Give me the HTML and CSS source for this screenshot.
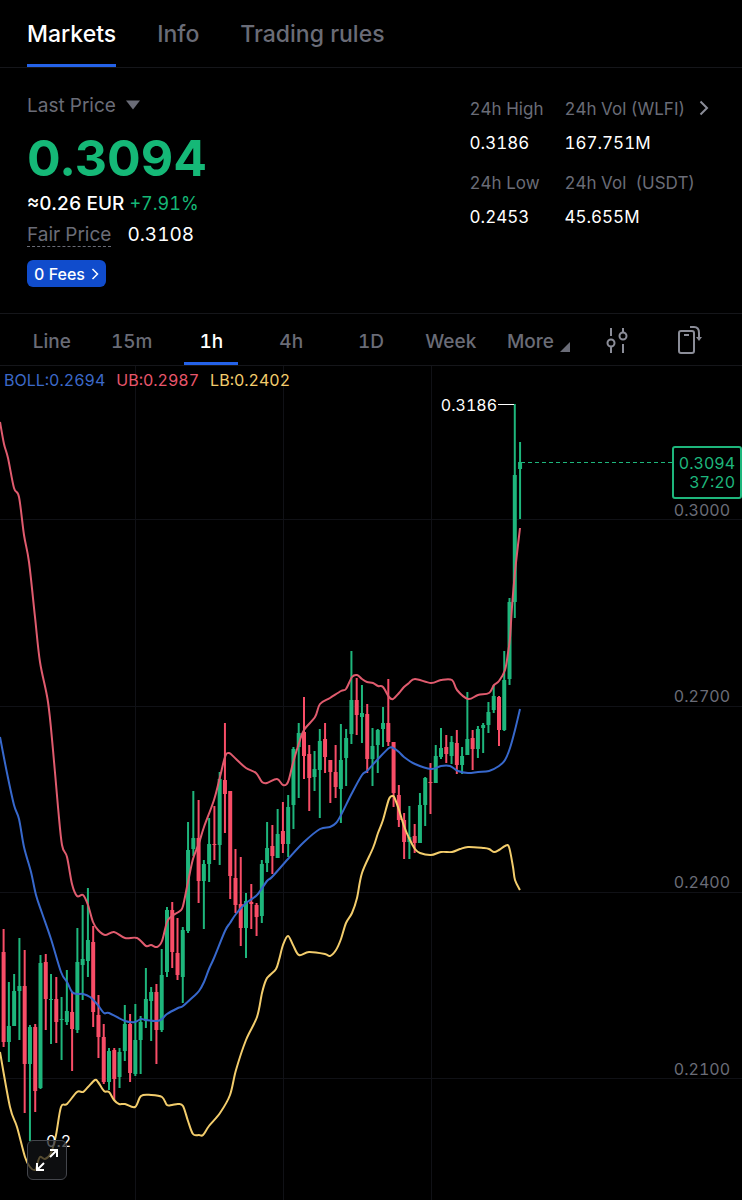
FILE: index.html
```html
<!DOCTYPE html>
<html lang="en">
<head>
    <title>WLFI/USDT Markets</title>
    <meta charset="UTF-8">
    <meta name="viewport" content="width=device-width, initial-scale=1.0">
    <link rel="stylesheet" href="styles.css">
</head>
<body>
    <nav class="tabs">
        <button type="button" class="tab active">Markets</button>
        <button type="button" class="tab">Info</button>
        <button type="button" class="tab">Trading rules</button>
    </nav>

    <!-- Price summary -->
    <section class="summary">
        <div class="price-block">
            <button type="button" class="price-type">
                Last Price
                <svg width="14" height="10" viewBox="0 0 14 10"><path d="M0 0.5h14L7 9.5z" fill="currentColor"/></svg>
            </button>
            <div class="last-price">0.3094</div>
            <div class="converted">≈0.26 EUR <span class="up">+7.91%</span></div>
            <div class="fair"><span class="fair-label">Fair Price</span><span class="fair-value">0.3108</span></div>
            <button type="button" class="fees">
                0 Fees
                <svg width="8" height="12" viewBox="0 0 8 12"><path d="M1.5 1L6.5 6l-5 5" fill="none" stroke="currentColor" stroke-width="1.5"/></svg>
            </button>
        </div>
        <div class="stats">
            <dl class="stat"><dt>24h High</dt><dd>0.3186</dd></dl>
            <dl class="stat"><dt>24h Vol (WLFI)</dt><dd>167.751M</dd></dl>
            <dl class="stat"><dt>24h Low</dt><dd>0.2453</dd></dl>
            <dl class="stat"><dt>24h Vol&nbsp; (USDT)</dt><dd>45.655M</dd></dl>
        </div>
        <button type="button" class="stats-more" aria-label="More statistics">
            <svg width="10" height="16" viewBox="0 0 10 16"><path d="M1.5 1.5L8 8l-6.500 6.500" fill="none" stroke="currentColor" stroke-width="2"/></svg>
        </button>
    </section>

    <!-- Chart intervals -->
    <nav class="intervals">
        <button type="button" class="interval">Line</button>
        <button type="button" class="interval">15m</button>
        <button type="button" class="interval active">1h</button>
        <button type="button" class="interval">4h</button>
        <button type="button" class="interval">1D</button>
        <button type="button" class="interval">Week</button>
        <button type="button" class="interval more">
            More
            <svg width="10" height="10" viewBox="0 0 10 10"><path d="M10 0v10H0z" fill="currentColor"/></svg>
        </button>
        <button type="button" class="interval icon" aria-label="Indicators">
            <svg width="22" height="28" viewBox="0 0 22 28" fill="none" stroke="currentColor" stroke-width="2">
                <path d="M5 2v8M5 20v7M17 2v5M17 18v9"/>
                <circle cx="5" cy="17" r="3.500"/>
                <circle cx="17" cy="10" r="3.500"/>
            </svg>
        </button>
        <button type="button" class="interval icon" aria-label="Rotate screen">
            <svg width="26" height="30" viewBox="0 0 26 30" fill="none" stroke="currentColor" stroke-width="2">
                <rect x="2" y="6" width="15" height="22" rx="2"/>
                <path d="M7 10h5M13 2h4q5 0 5 6v5"/>
                <path d="M19 12h6l-3 4z" fill="currentColor" stroke="none"/>
            </svg>
        </button>
    </nav>

    <main class="chart">
        <div class="legend">
            <span class="boll">BOLL:0.2694</span>
            <span class="ub">UB:0.2987</span>
            <span class="lb">LB:0.2402</span>
        </div>
        <svg class="plot" viewBox="0 366 742 834">
            <path class="grid" d="M0 519.500H742M0 706.500H742M0 892.500H742M0 1078.500H742M135.500 366V1200M283.500 366V1200M431.500 366V1200"/>
            <g id="candles"></g>
            <g id="bands"></g>
            <path class="current-line" d="M521 462.500H673"/>
            <path class="high-mark" d="M498 404.500H514"/>
            <text class="mark" x="497" y="411" text-anchor="end">0.3186</text>
            <text class="mark" x="46" y="1147">0.2</text>
            <g class="axis">
                <text x="730" y="516">0.3000</text>
                <text x="730" y="702">0.2700</text>
                <text x="730" y="888">0.2400</text>
                <text x="730" y="1075">0.2100</text>
            </g>
            <rect class="tag-box" x="673" y="447" width="68" height="51" rx="2"/>
            <g class="tag-text">
                <text x="735" y="469">0.3094</text>
                <text x="735" y="488">37:20</text>
            </g>
        </svg>
        <button type="button" class="expand" aria-label="Full screen">
            <svg width="26" height="26" viewBox="0 0 26 26" fill="none" stroke="currentColor" stroke-width="2">
                <path d="M16 10l7-7M16 3h7v7M10 16l-7 7M3 16v7h7"/>
            </svg>
        </button>
    </main>

    <script>
        // direction, high, body top, body bottom, low (chart units)
        const candles = [
            ["r",929,952,1042,1047], ["g",982,1026,1042,1062], ["g",974,991,1026,1026], ["g",938,986,991,1040],
            ["r",950,986,1064,1113], ["g",1025,1027,1064,1141], ["r",1024,1027,1091,1112], ["g",955,963,1088,1089],
            ["r",954,962,999,1030], ["g",974,999,1000,1044], ["r",977,999,1022,1043], ["g",997,1019,1020,1060],
            ["g",970,1011,1022,1025], ["r",992,1012,1029,1071], ["g",928,962,1030,1033], ["g",905,959,965,1000],
            ["g",888,940,961,977], ["r",926,942,1012,1027], ["r",995,1015,1037,1058], ["r",1024,1037,1082,1084],
            ["g",1048,1051,1082,1090], ["r",1048,1050,1079,1100], ["g",1048,1052,1077,1088], ["g",1005,1024,1051,1061],
            ["r",1014,1024,1073,1082], ["g",1004,1040,1074,1076], ["g",1016,1022,1040,1074], ["g",968,999,1021,1028],
            ["g",987,992,1001,1041], ["r",984,992,1030,1064], ["g",949,975,1030,1032], ["g",907,910,972,977],
            ["r",902,910,952,968], ["r",918,953,975,980], ["g",927,930,977,1003], ["g",822,850,931,933],
            ["g",791,838,849,856], ["r",800,838,881,903], ["g",860,864,881,929], ["g",818,844,864,882],
            ["r",806,844,845,860], ["g",772,779,845,865], ["r",723,780,794,833], ["r",791,791,876,899],
            ["r",849,878,905,913], ["r",857,904,928,946], ["g",893,901,928,958], ["r",884,902,904,929],
            ["r",903,905,917,936], ["g",860,864,916,923], ["g",822,848,863,872], ["r",825,846,856,874],
            ["g",809,834,858,858], ["r",802,831,844,853], ["g",795,807,844,857], ["g",747,749,805,829],
            ["g",723,733,747,798], ["r",697,732,756,779], ["r",745,754,778,811], ["g",751,769,777,791],
            ["g",729,741,770,818], ["r",723,739,757,773], ["r",760,760,772,803], ["r",745,772,787,798],
            ["g",724,760,789,823], ["g",729,738,758,786], ["g",651,700,734,744], ["r",678,700,715,735],
            ["g",685,713,717,743], ["r",704,714,759,773], ["g",728,746,759,786], ["g",729,730,745,773],
            ["g",707,723,729,747], ["r",679,723,742,746], ["r",742,742,793,807], ["r",785,795,820,827],
            ["r",813,820,842,859], ["g",806,837,842,859], ["r",824,836,843,853], ["g",793,805,843,843],
            ["g",777,778,805,826], ["r",763,782,783,814], ["g",745,756,783,783], ["g",728,748,757,759],
            ["r",735,747,754,763], ["g",736,742,756,764], ["r",730,743,765,774], ["g",747,756,765,774],
            ["g",692,739,755,755], ["r",730,738,749,770], ["g",726,729,749,758], ["g",723,725,728,753],
            ["g",702,712,725,733], ["g",685,696,710,713], ["r",696,697,730,746], ["g",651,680,730,731],
            ["g",598,602,679,685], ["g",404,475,602,618], ["g",442,462,469,519]
        ];

        const bands = {
            upper: [0,422, 4,444, 8,458, 14,488, 19,497, 24,535, 29,562, 35,617, 40,662, 48,702, 53,750, 58,807, 62,845, 67,857,
                72,884, 77,896, 83,895, 88,905, 93,922, 98,930, 105,935, 114,932, 125,938, 137,938, 146,946, 151,945, 157,947,
                162,941, 167,922, 172,916, 180,911, 183,906, 188,882, 193,859, 199,843, 204,827, 214,800, 220,777, 225,757,
                229,753, 236,759, 246,768, 256,773, 262,782, 267,783, 277,779, 283,785, 288,782, 293,763, 299,743, 304,730,
                315,717, 320,704, 330,698, 341,691, 346,689, 352,677, 357,675, 362,679, 367,682, 373,683, 378,686, 383,687,
                389,697, 393,699, 399,693, 404,687, 409,683, 415,679, 431,683, 441,680, 452,680, 457,690, 468,699, 478,695,
                489,693, 494,685, 499,681, 505,670, 508,653, 510,638, 512,607, 515,572, 520,528],
            middle: [0,737, 7,773, 14,805, 19,819, 24,847, 31,872, 36,895, 42,913, 51,939, 61,972, 67,982, 72,992, 77,994, 83,994,
                90,997, 97,1004, 104,1013, 109,1013, 125,1021, 135,1022, 141,1019, 146,1020, 157,1021, 162,1019, 167,1014,
                178,1008, 183,1006, 193,997, 199,991, 204,982, 209,969, 214,958, 225,931, 230,923, 236,914, 246,903, 257,895,
                267,881, 272,877, 288,859, 304,842, 320,829, 330,827, 336,823, 341,815, 352,793, 362,775, 367,771, 378,759,
                389,748, 393,748, 399,752, 404,757, 415,764, 431,769, 441,766, 450,766, 458,771, 468,773, 478,772, 489,771,
                499,766, 505,760, 510,748, 515,730, 520,709],
            lower: [0,1052, 10,1107, 17,1127, 25,1157, 30,1167, 35,1170, 37,1165, 40,1157, 45,1159, 51,1153, 56,1135, 61,1107,
                67,1104, 77,1092, 83,1092, 88,1087, 95,1080, 98,1082, 104,1091, 109,1092, 114,1100, 119,1104, 125,1104,
                135,1107, 141,1096, 151,1095, 162,1097, 167,1105, 172,1105, 178,1104, 183,1106, 188,1121, 193,1134, 199,1135,
                203,1135, 209,1126, 220,1113, 230,1095, 236,1070, 246,1040, 257,1017, 262,993, 266,980, 270,975, 276,969,
                279,960, 283,945, 288,936, 293,945, 299,955, 309,952, 325,954, 330,956, 336,950, 341,939, 346,923, 352,913,
                357,898, 362,873, 373,848, 378,833, 383,820, 389,799, 393,796, 395,799, 399,810, 404,826, 409,838, 415,849,
                420,853, 431,855, 441,852, 452,852, 460,849, 468,847, 483,848, 489,849, 494,852, 499,850, 505,846, 509,847,
                513,867, 515,880, 520,890]
        };

        const NS = "http://www.w3.org/2000/svg";

        function addPath(parent, className, d) {
            const path = document.createElementNS(NS, "path");
            path.setAttribute("class", className);
            path.setAttribute("d", d);
            parent.appendChild(path);
        }

        // Smooth curve through all points
        function smooth(values) {
            const points = [];
            for (let i = 0; i < values.length; i += 2) {
                points.push([values[i], values[i + 1]]);
            }
            let d = `M${points[0]}`;
            for (let i = 0; i < points.length - 1; i++) {
                const a = points[i - 1] || points[i];
                const b = points[i];
                const c = points[i + 1];
                const e = points[i + 2] || c;
                d += `C${b[0] + (c[0] - a[0]) / 6},${b[1] + (c[1] - a[1]) / 6} ${c[0] - (e[0] - b[0]) / 6},${c[1] - (e[1] - b[1]) / 6} ${c}`;
            }
            return d;
        }

        const candleGroup = document.getElementById("candles");
        candles.forEach(([dir, high, top, bottom, low], i) => {
            const x = 3.6 + i * 5.27;
            addPath(candleGroup, `wick ${dir}`, `M${x} ${high}V${low}`);
            addPath(candleGroup, `body ${dir}`, `M${x} ${top}V${bottom}`);
        });

        const bandGroup = document.getElementById("bands");
        Object.keys(bands).forEach((name) => {
            addPath(bandGroup, `band ${name}`, smooth(bands[name]));
        });
    </script>
</body>
</html>
```
FILE: styles.css
```css
*, *:before, *:after {
    box-sizing: border-box;
}

body {
    margin: 0;
    background-color: #000;
    color: #fff;
    font-family: Inter, "Liberation Sans", sans-serif;
    font-size: 19px;
    font-variant-numeric: tabular-nums;
}

button {
    padding: 0;
    border: none;
    background: none;
    color: inherit;
    font: inherit;
    font-variant-numeric: inherit;
    cursor: pointer;
}

svg {
    display: block;
}

.tabs {
    display: flex;
    gap: 41px;
    height: 68px;
    padding: 0 27px;
    border-bottom: 1px solid #15161a;
}

.tab {
    height: 67px;
    padding-top: 4px;
    border-bottom: 3px solid transparent;
    color: #6a6c77;
    font-size: 23px;
    font-weight: 500;
}

.tab.active {
    color: #fff;
    border-bottom-color: #2462e8;
}

.summary {
    display: flex;
    align-items: flex-start;
    padding: 24px 33px 26px 27px;
    border-bottom: 1px solid #15161a;
}

.price-block {
    flex: 1;
}

.price-type {
    display: flex;
    align-items: center;
    gap: 10px;
    height: 26px;
    color: #6a6c77;
}

.last-price {
    color: #15b877;
    font-size: 50px;
    font-weight: 700;
    font-variant-numeric: normal;
    line-height: 60px;
    margin-top: 10px;
}

.converted {
    font-weight: 500;
    line-height: 30px;
    margin-top: 1px;
}

.up {
    color: #15b877;
    font-size: 18px;
    font-weight: 400;
}

.fair {
    display: flex;
    gap: 16px;
    line-height: 22px;
    margin-top: 5px;
}

.fair-label {
    color: #6a6c77;
    border-bottom: 1px dashed #6a6c77;
}

.fair-value {
    font-size: 19px;
}

.fees {
    display: flex;
    align-items: center;
    gap: 6px;
    height: 27px;
    margin-top: 13px;
    padding: 0 7px;
    border-radius: 6px;
    background-color: #104ccc;
    font-size: 16px;
    font-weight: 500;
}

.stats {
    display: grid;
    grid-template-columns: auto auto;
    column-gap: 21px;
    row-gap: 6px;
}

.stat {
    margin: 0;
    line-height: 34px;
}

.stat dt {
    color: #6a6c77;
    font-size: 17px;
}

.stat dd {
    margin: 0;
    font-size: 17px;
}

.stats-more {
    color: #8b8d98;
    margin: 8px 0 0 4px;
}

.intervals {
    display: grid;
    grid-template-columns: repeat(6, 80fr) 96fr 62fr 84fr;
    justify-items: center;
    height: 52px;
    padding: 0 10px 0 12px;
    border-bottom: 1px solid #15161a;
}

.interval {
    display: flex;
    align-items: center;
    justify-content: center;
    min-width: 54px;
    padding-top: 6px;
    border-bottom: 3px solid transparent;
    color: #6a6c77;
    font-size: 19px;
    font-weight: 500;
}

.interval.active {
    color: #fff;
    border-bottom-color: #2462e8;
}

.more {
    gap: 6px;
}

.more svg {
    margin-top: 12px;
}

.icon {
    padding-top: 3px;
    color: #8b8d98;
}

.chart {
    position: relative;
}

.legend {
    position: absolute;
    top: 4px;
    left: 4px;
    display: flex;
    gap: 11px;
    font-size: 16px;
    line-height: 20px;
}

.boll {
    color: #3c69c8;
}

.ub {
    color: #e8566c;
}

.lb {
    color: #f3cd6c;
}

.plot {
    width: 100%;
    height: auto;
    font-size: 16px;
}

.grid {
    fill: none;
    stroke: #101116;
}

.wick {
    stroke-width: 2px;
}

.body {
    stroke-width: 4px;
}

.r {
    stroke: #f84d67;
}

.g {
    stroke: #1eb67c;
}

.band {
    fill: none;
    stroke-width: 2px;
}

.upper {
    stroke: #e05b6e;
}

.middle {
    stroke: #3768cc;
}

.lower {
    stroke: #f3cd6c;
}

.current-line {
    stroke: #1eb67c;
    stroke-dasharray: 4 3;
}

.high-mark {
    stroke: #fff;
}

.mark {
    fill: #fff;
}

.axis {
    fill: #6a6c77;
    text-anchor: end;
}

.tag-box {
    fill: #000;
    stroke: #1eb67c;
    stroke-width: 2px;
}

.tag-text {
    fill: #1eb67c;
    text-anchor: end;
}

.expand {
    position: absolute;
    left: 27px;
    bottom: 20px;
    display: flex;
    align-items: center;
    justify-content: center;
    width: 40px;
    height: 40px;
    border: 1px solid #44464c;
    border-radius: 6px;
    background-color: rgba(18, 20, 23, 0.7);
}
```
